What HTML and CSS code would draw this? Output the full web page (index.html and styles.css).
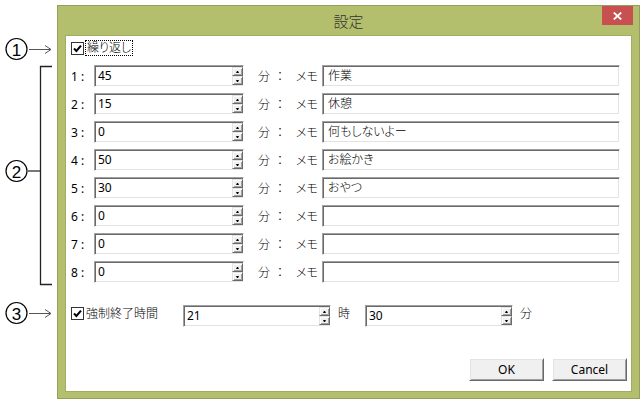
FILE: index.html
```html
<!DOCTYPE html>
<html lang="ja">
<head>
<meta charset="utf-8">
<title>設定</title>
<link rel="stylesheet" href="styles.css">
</head>
<body>
<svg class="annot" viewBox="0 0 57 404" width="57" height="404">
  <g fill="none" stroke="#000" stroke-width="1.2">
    <circle cx="16.5" cy="49" r="10.5"/>
    <circle cx="16.5" cy="171" r="10.5"/>
    <circle cx="16.5" cy="313" r="10.5"/>
  </g>
  <g class="annot-num" text-anchor="middle">
    <text x="16.5" y="55.5">1</text>
    <text x="16.5" y="177.5">2</text>
    <text x="16.5" y="319.5">3</text>
  </g>
  <g stroke="#555" fill="none" stroke-width="1">
    <path d="M29 49.5H51M45 45.5L51 49.5L45 53.5"/>
    <path d="M29 313.5H51M45 309.5L51 313.5L45 317.5"/>
  </g>
  <path d="M28 171H40" stroke="#777" stroke-width="2" fill="none"/>
  <path d="M52 66.5H40.5V284.5H52" stroke="#222" stroke-width="1.3" fill="none"/>
</svg>

<div class="window">
  <div class="titlebar">
    <span class="title">設定</span>
    <div class="close">
      <svg width="9" height="8" viewBox="0 0 9 8"><path d="M0.8 0.5L8.2 7.5M8.2 0.5L0.8 7.5" stroke="#fff" stroke-width="1.8" fill="none"/></svg>
    </div>
  </div>
  <div class="client">
    <div class="repeat">
      <svg class="cb" width="13" height="13" viewBox="0 0 13 13"><rect x="0.5" y="0.5" width="12" height="12" fill="#fff" stroke="#333"/><path d="M3 6.5L5.4 9L10 3.6" stroke="#000" stroke-width="2" fill="none"/></svg>
      <span class="focus">繰り返し</span>
    </div>

    <div class="rows">
      <div class="row">
        <span class="lbl">1 :</span>
        <div class="spin"><span class="val">45</span><div class="sbs"><span class="sb up"></span><span class="sb down"></span></div></div>
        <span class="fun">分</span><span class="colon">：</span><span class="memol">メモ</span>
        <div class="field">作業</div>
      </div>
      <div class="row">
        <span class="lbl">2 :</span>
        <div class="spin"><span class="val">15</span><div class="sbs"><span class="sb up"></span><span class="sb down"></span></div></div>
        <span class="fun">分</span><span class="colon">：</span><span class="memol">メモ</span>
        <div class="field">休憩</div>
      </div>
      <div class="row">
        <span class="lbl">3 :</span>
        <div class="spin"><span class="val">0</span><div class="sbs"><span class="sb up"></span><span class="sb down"></span></div></div>
        <span class="fun">分</span><span class="colon">：</span><span class="memol">メモ</span>
        <div class="field">何もしないよー</div>
      </div>
      <div class="row">
        <span class="lbl">4 :</span>
        <div class="spin"><span class="val">50</span><div class="sbs"><span class="sb up"></span><span class="sb down"></span></div></div>
        <span class="fun">分</span><span class="colon">：</span><span class="memol">メモ</span>
        <div class="field">お絵かき</div>
      </div>
      <div class="row">
        <span class="lbl">5 :</span>
        <div class="spin"><span class="val">30</span><div class="sbs"><span class="sb up"></span><span class="sb down"></span></div></div>
        <span class="fun">分</span><span class="colon">：</span><span class="memol">メモ</span>
        <div class="field">おやつ</div>
      </div>
      <div class="row">
        <span class="lbl">6 :</span>
        <div class="spin"><span class="val">0</span><div class="sbs"><span class="sb up"></span><span class="sb down"></span></div></div>
        <span class="fun">分</span><span class="colon">：</span><span class="memol">メモ</span>
        <div class="field"></div>
      </div>
      <div class="row">
        <span class="lbl">7 :</span>
        <div class="spin"><span class="val">0</span><div class="sbs"><span class="sb up"></span><span class="sb down"></span></div></div>
        <span class="fun">分</span><span class="colon">：</span><span class="memol">メモ</span>
        <div class="field"></div>
      </div>
      <div class="row">
        <span class="lbl">8 :</span>
        <div class="spin"><span class="val">0</span><div class="sbs"><span class="sb up"></span><span class="sb down"></span></div></div>
        <span class="fun">分</span><span class="colon">：</span><span class="memol">メモ</span>
        <div class="field"></div>
      </div>
    </div>

    <div class="force">
      <svg class="cb cb-force" width="13" height="13" viewBox="0 0 13 13"><rect x="0.5" y="0.5" width="12" height="12" fill="#fff" stroke="#333"/><path d="M3 6.5L5.4 9L10 3.6" stroke="#000" stroke-width="2" fill="none"/></svg>
      <span class="force-label">強制終了時間</span>
      <div class="spin spin-short"><span class="val">21</span><div class="sbs"><span class="sb up"></span><span class="sb down"></span></div></div>
      <span class="unit">時</span>
      <div class="spin spin-short spin-min"><span class="val">30</span><div class="sbs"><span class="sb up"></span><span class="sb down"></span></div></div>
      <span class="unit">分</span>
    </div>

    <div class="buttons">
      <div class="btn">OK</div>
      <div class="btn">Cancel</div>
    </div>
  </div>
</div>
</body>
</html>
```

FILE: styles.css
```css
* {
  box-sizing: border-box;
}

body {
  margin: 0;
  width: 644px;
  height: 404px;
  overflow: hidden;
  background: #fff;
  display: flex;
  align-items: flex-start;
  font-family: "Noto Sans", "Noto Sans CJK JP", sans-serif;
  font-size: 12px;
  font-weight: 300;
  color: #000;
  font-feature-settings: "palt";
}

.annot {
  display: block;
  flex: none;
  width: 57px;
  height: 404px;
}

.annot-num {
  font-family: "Liberation Sans", sans-serif;
  font-size: 17px;
  fill: #000;
}

.window {
  margin-top: 5px;
  width: 583px;
  height: 394px;
  border: 1px solid #939f5a;
  background: #b3bf6d;
  padding: 0 7px 6px;
  display: flex;
  flex-direction: column;
}

.titlebar {
  flex: none;
  height: 29px;
  position: relative;
  display: flex;
  align-items: center;
  justify-content: center;
}

.title {
  font-family: "Noto Sans CJK JP", sans-serif;
  font-size: 15px;
  line-height: 1;
  color: #333;
}

.close {
  position: absolute;
  right: -1px;
  top: 0;
  width: 31px;
  height: 19px;
  background: #c75050;
  display: flex;
  align-items: center;
  justify-content: center;
}

.close svg {
  display: block;
}

.client {
  flex: 1;
  background: #fff;
  border: 1px solid #a2ad63;
  padding: 4px 0 0 4px;
  display: flex;
  flex-direction: column;
}

.repeat {
  display: flex;
  align-items: center;
  height: 16px;
}

.cb {
  display: block;
  flex: none;
  margin-left: 1px;
}

.focus {
  margin-left: 1px;
  height: 16px;
  border: 1px dotted #000;
  padding: 0 1px;
  line-height: 14px;
}

.rows {
  margin-top: 9px;
  display: flex;
  flex-direction: column;
  gap: 6px;
}

.row {
  display: flex;
  align-items: center;
  height: 22px;
}

.lbl {
  flex: none;
  width: 24px;
  padding-left: 1px;
  white-space: pre;
  font-weight: 400;
}

.spin {
  flex: none;
  width: 150px;
  height: 22px;
  display: flex;
  background: #fff;
  border: 1px solid;
  border-color: #a0a0a0 #fff #fff #a0a0a0;
  box-shadow: inset 1px 1px #696969, inset -1px -1px #e3e3e3;
  padding: 1px 0 1px 2px;
}

.spin-short {
  width: 148px;
}

.spin-min {
  margin-left: 15px;
}

.val {
  flex: 1;
  padding-left: 1px;
  line-height: 18px;
  font-weight: 400;
}

.sbs {
  flex: none;
  width: 11px;
  display: flex;
  flex-direction: column;
}

.sb {
  flex: 1;
  background: #f0f0f0;
  border: 1px solid;
  border-color: #e3e3e3 #696969 #696969 #e3e3e3;
  box-shadow: inset 1px 1px #fff, inset -1px -1px #a0a0a0;
  display: flex;
  align-items: center;
  justify-content: center;
}

.sb::after {
  content: "";
  width: 1px;
  height: 0;
  border-left: 1px solid transparent;
  border-right: 1px solid transparent;
}

.up::after {
  border-bottom: 2px solid #000;
}

.down::after {
  border-top: 2px solid #000;
}

.fun {
  flex: none;
  margin-left: 14px;
  width: 16px;
}

.colon {
  flex: none;
  width: 12px;
  font-feature-settings: normal;
}

.memol {
  flex: none;
  margin-left: 10px;
  width: 26px;
}

.field {
  flex: none;
  width: 298px;
  height: 22px;
  background: #fff;
  border: 1px solid;
  border-color: #a0a0a0 #fff #fff #a0a0a0;
  box-shadow: inset 1px 1px #696969, inset -1px -1px #e3e3e3;
  padding: 1px 0 1px 5px;
  line-height: 18px;
}

.force {
  margin-top: 22px;
  height: 22px;
  display: flex;
  align-items: flex-start;
}

.cb-force {
  margin-top: 2px;
}

.force-label {
  flex: none;
  width: 97px;
  margin-left: 2px;
  line-height: 18px;
}

.unit {
  flex: none;
  margin-left: 7px;
  width: 12px;
  line-height: 18px;
}

.buttons {
  margin-top: 31px;
  padding-right: 4px;
  display: flex;
  justify-content: flex-end;
  gap: 8px;
}

.btn {
  width: 75px;
  height: 23px;
  background: #f0f0f0;
  border: 1px solid;
  border-color: #fff #696969 #696969 #fff;
  box-shadow: inset 1px 1px #e3e3e3, inset -1px -1px #a0a0a0;
  display: flex;
  align-items: center;
  justify-content: center;
  line-height: 1;
  font-weight: 400;
}
```
